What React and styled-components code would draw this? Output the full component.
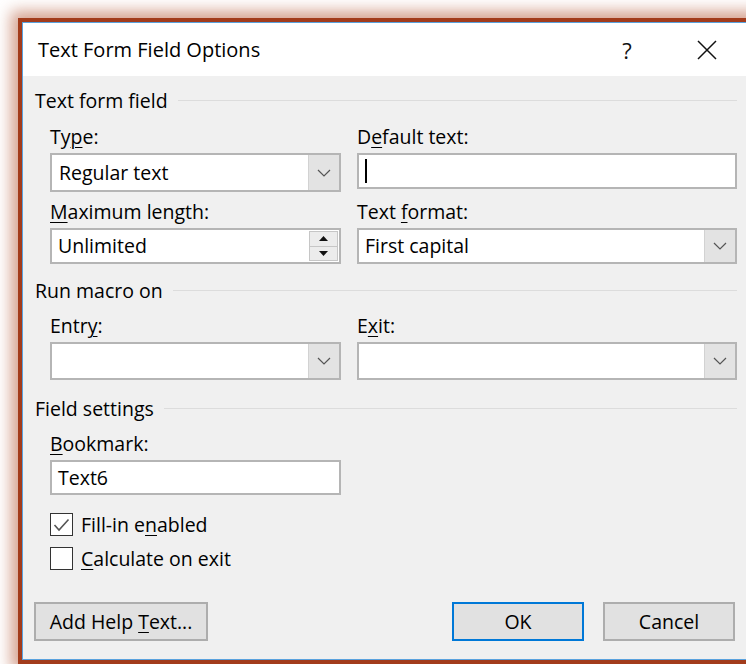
import React from 'react';
import styled, { createGlobalStyle } from 'styled-components';

const GlobalStyle = createGlobalStyle`
  html, body {
    margin: 0;
    padding: 0;
    background: #fff;
  }
  body {
    font-family: "Open Sans", "Noto Sans", Arial, sans-serif;
    color: #000;
    overflow: hidden;
  }
`;

const Stage = styled.div`
  width: 746px;
  height: 664px;
  padding: 18px 0 0 18px;
  box-sizing: border-box;
  overflow: hidden;
`;

// brown picture frame with a soft glow around the dialog
const Frame = styled.div`
  box-sizing: border-box;
  width: 736px;
  height: 646px;
  border: 4px solid #a23c1c;
  box-shadow: 0 0 14px 7px rgba(185, 100, 70, 0.6);
`;

const Window = styled.div`
  box-sizing: border-box;
  height: 100%;
  border: 1px solid #5aa2de;
  display: flex;
  flex-direction: column;
  background: #f0f0f0;
`;

const TitleBar = styled.div`
  flex: none;
  height: 53px;
  display: flex;
  align-items: center;
  padding: 0 19px 0 15px;
  background: #fff;
  font-size: 20px;
  line-height: 28px;
`;

const Title = styled.div`
  flex: 1;
`;

const TitleButton = styled.div`
  width: 46px;
  height: 53px;
  display: flex;
  align-items: center;
  justify-content: center;
  margin-left: ${p => p.$gap || 0}px;
  font-size: 22px;
  color: #111;
`;

const Body = styled.div`
  flex: 1;
  display: flex;
  flex-direction: column;
  padding: 14px 12px 0 12px;
  font-size: 19.5px;
  line-height: 22px;
`;

const SectionHeader = styled.div`
  display: flex;
  align-items: center;
  gap: 10px;
  margin-top: ${p => p.$top || 0}px;

  &::after {
    content: '';
    flex: 1;
    height: 1px;
    margin-bottom: 2px;
    background: #dcdcdc;
  }
`;

const FieldGrid = styled.div`
  display: grid;
  grid-template-columns: 291px 380px;
  column-gap: 16px;
  row-gap: 9px;
  align-items: start;
  padding-left: 15px;
  margin-top: ${p => p.$top}px;
`;

const Field = styled.div`
  display: flex;
  flex-direction: column;
  gap: 5px;
`;

const Label = styled.div`
  white-space: nowrap;
`;

const Key = styled.u`
  text-decoration-thickness: 1px;
  text-underline-offset: 3px;
`;

const Box = styled.div`
  box-sizing: border-box;
  height: ${p => p.$h || 36}px;
  display: flex;
  align-items: stretch;
  background: #fff;
  border: 2px solid #b5b5b5;
`;

const Value = styled.div`
  flex: 1;
  display: flex;
  align-items: center;
  padding-left: ${p => p.$pad || 6}px;
  white-space: nowrap;
`;

const Caret = styled.span`
  width: 2px;
  height: 24px;
  background: #000;
`;

const DropButton = styled.div`
  width: 30px;
  display: flex;
  align-items: center;
  justify-content: center;
  background: #e3e3e3;
  border-left: 1px solid #d2d2d2;
`;

const Spinner = styled.div`
  width: 29px;
  display: flex;
  flex-direction: column;
  background: #fff;
  padding: 1px 1px 1px 0;
`;

const SpinButton = styled.div`
  flex: 1;
  display: flex;
  align-items: center;
  justify-content: center;
  background: #ececec;
  border: 1px solid #c6c6c6;
  & + & {
    border-top: none;
  }
`;

const CheckList = styled.div`
  display: flex;
  flex-direction: column;
  gap: 11px;
  padding-left: 15px;
  margin-top: 18px;
`;

const CheckRow = styled.label`
  display: flex;
  align-items: center;
  gap: 8px;
`;

const CheckBox = styled.span`
  box-sizing: border-box;
  width: 23px;
  height: 23px;
  border: 1.5px solid #333;
  background: #fff;
  display: flex;
  align-items: center;
  justify-content: center;
`;

const ButtonRow = styled.div`
  display: flex;
  align-items: center;
  margin: 32px 2px 0 -1px;
`;

const Button = styled.button`
  box-sizing: border-box;
  width: ${p => p.$w}px;
  height: 39px;
  padding: 0;
  margin-left: ${p => (p.$push ? 'auto' : `${p.$ml || 0}px`)};
  font: inherit;
  font-size: 19.5px;
  color: #000;
  background: #e1e1e1;
  border: 2px solid ${p => (p.$primary ? '#0078d7' : '#adadad')};
`;

const Chevron = () => (
  <svg width="14" height="8" viewBox="0 0 14 8">
    <polyline points="1,1 7,7 13,1" fill="none" stroke="#555" strokeWidth="1.2" />
  </svg>
);

const Triangle = ({ down }) => (
  <svg width="9" height="5" viewBox="0 0 9 5">
    <polygon points={down ? '0,0 9,0 4.5,5' : '0,5 9,5 4.5,0'} fill="#111" />
  </svg>
);

const CloseIcon = () => (
  <svg width="20" height="20" viewBox="0 0 20 20">
    <path d="M1 1 L19 19 M19 1 L1 19" stroke="#111" strokeWidth="1.5" fill="none" />
  </svg>
);

const Tick = () => (
  <svg width="17" height="14" viewBox="0 0 17 14">
    <polyline points="1.5,7 6,12 15.5,1.5" fill="none" stroke="#555" strokeWidth="1.6" />
  </svg>
);

const Combo = ({ value, h, pad }) => (
  <Box $h={h}>
    <Value $pad={pad}>{value}</Value>
    <DropButton><Chevron /></DropButton>
  </Box>
);

const Check = ({ checked, children }) => (
  <CheckRow>
    <CheckBox>{checked && <Tick />}</CheckBox>
    <span>{children}</span>
  </CheckRow>
);

export default function App() {
  return (
    <Stage>
      <GlobalStyle />
      <Frame>
        <Window>
          <TitleBar>
            <Title>Text Form Field Options</Title>
            <TitleButton>?</TitleButton>
            <TitleButton $gap={34}><CloseIcon /></TitleButton>
          </TitleBar>

          <Body>
            <SectionHeader>Text form field</SectionHeader>
            <FieldGrid $top={14}>
              <Field>
                <Label>Ty<Key>p</Key>e:</Label>
                <Combo value="Regular text" h={39} pad={7} />
              </Field>
              <Field>
                <Label>D<Key>e</Key>fault text:</Label>
                <Box $h={36}>
                  <Value><Caret /></Value>
                </Box>
              </Field>
              <Field>
                <Label><Key>M</Key>aximum length:</Label>
                <Box $h={36}>
                  <Value>Unlimited</Value>
                  <Spinner>
                    <SpinButton><Triangle /></SpinButton>
                    <SpinButton><Triangle down /></SpinButton>
                  </Spinner>
                </Box>
              </Field>
              <Field>
                <Label>Text <Key>f</Key>ormat:</Label>
                <Combo value="First capital" h={36} />
              </Field>
            </FieldGrid>

            <SectionHeader $top={16}>Run macro on</SectionHeader>
            <FieldGrid $top={13}>
              <Field>
                <Label>Entr<Key>y</Key>:</Label>
                <Combo value="" h={38} />
              </Field>
              <Field>
                <Label>E<Key>x</Key>it:</Label>
                <Combo value="" h={38} />
              </Field>
            </FieldGrid>

            <SectionHeader $top={18}>Field settings</SectionHeader>
            <FieldGrid $top={13}>
              <Field>
                <Label><Key>B</Key>ookmark:</Label>
                <Box $h={35}>
                  <Value>Text6</Value>
                </Box>
              </Field>
            </FieldGrid>

            <CheckList>
              <Check checked>Fill-in e<Key>n</Key>abled</Check>
              <Check><Key>C</Key>alculate on exit</Check>
            </CheckList>

            <ButtonRow>
              <Button $w={174}>Add Help <Key>T</Key>ext...</Button>
              <Button $w={132} $push $primary>OK</Button>
              <Button $w={132} $ml={19}>Cancel</Button>
            </ButtonRow>
          </Body>
        </Window>
      </Frame>
    </Stage>
  );
}
